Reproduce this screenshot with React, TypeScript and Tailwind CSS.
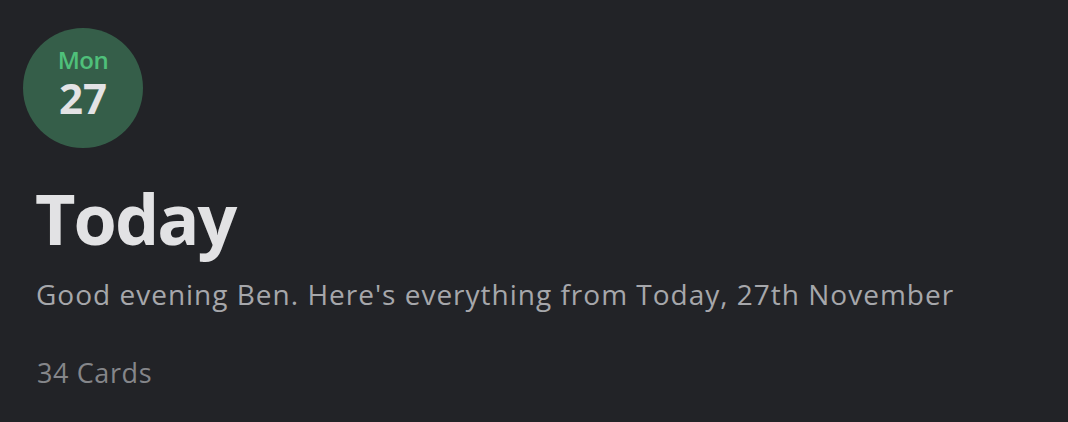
export default function App() {
  return (
    <div className="w-[1068px] h-[422px] bg-[#222327] overflow-hidden" style={{ fontFamily: '"Open Sans", Lato, sans-serif' }}>
      <div className="pl-[23px] pt-[28px] flex flex-col">
        <div className="w-[120px] h-[120px] rounded-full bg-[#355e49] flex flex-col items-center pt-[16px]">
          <div className="text-[24px] leading-[32px] font-semibold tracking-[-0.5px] text-[#4fc07a]">Mon</div>
          <div className="text-[42px] leading-[44px] font-bold tracking-[0px] text-[#e3e3e5]">27</div>
        </div>
        <div className="mt-[30px] pl-[12px] text-[70px] leading-[80px] font-bold tracking-[-2px] text-[#e2e2e4]">Today</div>
        <div className="mt-[18px] pl-[13px] text-[28px] leading-[36px] tracking-[1px] text-[#a6a7ab]">Good evening Ben. Here's everything from Today, 27th November</div>
        <div className="mt-[44px] pl-[14px] text-[27px] leading-[34px] tracking-[0.6px] text-[#85868a]">34 Cards</div>
      </div>
    </div>
  );
}
